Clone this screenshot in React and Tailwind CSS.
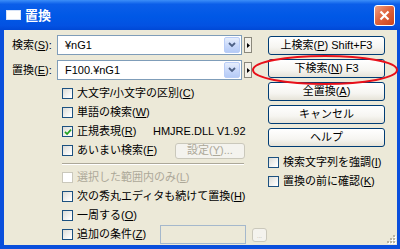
import React from 'react';

const FONT = "font-['Liberation_Sans','Noto_Sans_CJK_JP',sans-serif]";

function XpButton({ children, className = '' }) {
  return (
    <div
      className={`flex h-[19px] w-[117px] items-center justify-center rounded-[3px] border border-[#003c74] bg-[linear-gradient(180deg,#ffffff_0%,#f6f5f1_60%,#e6e3d8_100%)] text-[11px] leading-none text-black ${className}`}
    >
      {children}
    </div>
  );
}

function Check({ checked, disabled, children, className = '' }) {
  return (
    <div className={`flex h-[19px] items-center ${className}`}>
      <span
        className={`flex h-[11px] w-[11px] shrink-0 items-center justify-center border ${
          disabled
            ? 'border-[#cac8bb] bg-white'
            : 'border-[#1c5180] bg-[linear-gradient(135deg,#dcdcd7_0%,#ffffff_90%)]'
        }`}
      >
        {checked && (
          <svg width="8" height="8" viewBox="0 0 8 8">
            <path d="M1 3.8 L3.1 6 L7 1.6" fill="none" stroke="#21a121" strokeWidth="1.7" />
          </svg>
        )}
      </span>
      <span
        className={`ml-[4px] whitespace-nowrap text-[11px] leading-none ${
          disabled ? 'text-[#aca899]' : 'text-black'
        }`}
      >
        {children}
      </span>
    </div>
  );
}

function Combo({ label, value }) {
  return (
    <div className="flex h-[20px] items-center">
      <div className="w-[53px] pl-[8px] text-[11px] leading-none text-black whitespace-nowrap">{label}</div>
      <div className="flex h-[20px] w-[185px] items-center border border-[#7f9db9] bg-white pl-[7px] pr-[1px]">
        <span className="flex-1 text-[11px] leading-none text-black">{value}</span>
        <span className="flex h-[16px] w-[16px] items-center justify-center rounded-[2px] border border-[#b9cdf7] bg-[linear-gradient(180deg,#e6eefc_0%,#c5d6fa_60%,#b5cbf6_100%)]">
          <svg width="8" height="6" viewBox="0 0 8 6">
            <path d="M1 1 L4 4 L7 1" fill="none" stroke="#4d6185" strokeWidth="1.8" />
          </svg>
        </span>
      </div>
      <div className="ml-[2px] flex h-[16px] w-[8px] items-center justify-center border border-[#8a887c] bg-[#f3f1e8]">
        <svg width="3" height="5" viewBox="0 0 3 5">
          <path d="M0 0 L3 2.5 L0 5 Z" fill="#000" />
        </svg>
      </div>
    </div>
  );
}

export default function App() {
  return (
    <div className={`relative h-[249px] w-[400px] overflow-hidden bg-[#0a4fdc] ${FONT}`}>
      {/* Title bar */}
      <div className="flex h-[30px] items-center bg-[linear-gradient(180deg,#3c8ef8_0%,#0b5ee9_14%,#0058e6_55%,#0352e2_85%,#0048d6_100%)] pl-[6px] pr-[5px]">
        <div className="h-[10px] w-[15px] border border-[#d8e4f8] bg-white" />
        <span className="ml-[4px] text-[13px] font-bold leading-none text-white">置換</span>
        <div className="ml-auto flex h-[21px] w-[21px] items-center justify-center rounded-[3px] border border-white bg-[linear-gradient(135deg,#f0a284_0%,#e0653f_45%,#c9431c_100%)]">
          <svg width="11" height="11" viewBox="0 0 11 11">
            <path d="M1.5 1.5 L9.5 9.5 M9.5 1.5 L1.5 9.5" stroke="#fff" strokeWidth="2.2" />
          </svg>
        </div>
      </div>

      {/* Body */}
      <div className="relative ml-[4px] mr-[3px] flex h-[215px] bg-[#ece9d8]">
        {/* Left column */}
        <div className="flex w-[264px] flex-col pt-[5px]">
          <Combo
            label={<>検索(<u>S</u>):</>}
            value="¥nG1"
          />
          <div className="h-[5px]" />
          <Combo
            label={<>置換(<u>E</u>):</>}
            value="F100.¥nG1"
          />
          <div className="flex flex-col pl-[58px] pt-[4px]">
            <Check>大文字/小文字の区別(<u>C</u>)</Check>
            <Check>単語の検索(<u>W</u>)</Check>
            <div className="flex items-center">
              <Check checked className="w-[91px]">正規表現(<u>R</u>)</Check>
              <span className="text-[11px] leading-none text-black">HMJRE.DLL V1.92</span>
            </div>
            <div className="flex items-center">
              <Check className="w-[113px]">あいまい検索(<u>F</u>)</Check>
              <div className="flex h-[16px] w-[70px] items-center justify-center rounded-[3px] border border-[#cac8bb] bg-[#f4f3ee] text-[11px] leading-none text-[#aca899]">
                設定(<u>Y</u>)...
              </div>
            </div>
            <div className="flex h-[8px] w-[182px] items-center">
              <div className="w-full border-t border-b border-t-[#aca899] border-b-white" />
            </div>
            <Check disabled>選択した範囲内のみ(<u>L</u>)</Check>
            <Check>次の秀丸エディタも続けて置換(<u>H</u>)</Check>
            <Check>一周する(<u>O</u>)</Check>
            <div className="flex items-center">
              <Check className="w-[98px]">追加の条件(<u>Z</u>)</Check>
              <div className="h-[19px] w-[86px] border border-[#a5b8cc] bg-[#ece9d8]" />
              <div className="ml-[6px] flex h-[14px] w-[15px] items-end justify-center rounded-[3px] border border-[#cac8bb] bg-[#f4f3ee] pb-[2px]">
                <span className="text-[6px] leading-none text-[#aca899]">...</span>
              </div>
            </div>
          </div>
        </div>

        {/* Right column */}
        <div className="flex flex-col gap-[4px] pt-[6px]">
          <XpButton>上検索(<u>P</u>) Shift+F3</XpButton>
          <XpButton>下検索(<u>N</u>) F3</XpButton>
          <XpButton>全置換(<u>A</u>)</XpButton>
          <XpButton>キャンセル</XpButton>
          <XpButton>ヘルプ</XpButton>
          <div className="flex flex-col pt-[2px]">
            <Check>検索文字列を強調(<u>I</u>)</Check>
            <Check>置換の前に確認(<u>K</u>)</Check>
          </div>
        </div>

        {/* Resize grip */}
        <svg className="absolute bottom-[1px] right-[1px]" width="11" height="11" viewBox="0 0 11 11">
          {[[8, 2], [8, 5], [5, 5], [8, 8], [5, 8], [2, 8]].map(([x, y]) => (
            <g key={`${x}-${y}`}>
              <rect x={x + 1} y={y + 1} width="2" height="2" fill="#ffffff" />
              <rect x={x} y={y} width="2" height="2" fill="#b8b4a2" />
            </g>
          ))}
        </svg>
      </div>

      {/* Red annotation ellipse */}
      <svg className="pointer-events-none absolute left-0 top-0" width="400" height="249">
        <ellipse cx="325" cy="70" rx="72" ry="14" fill="none" stroke="#e8101a" strokeWidth="2" />
      </svg>
    </div>
  );
}
